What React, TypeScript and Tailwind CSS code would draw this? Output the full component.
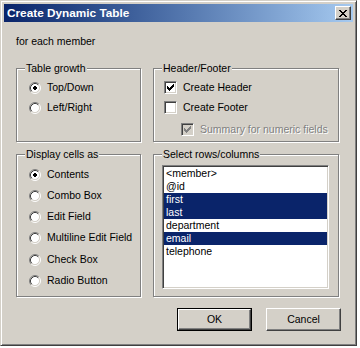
import type { ReactNode } from "react";

function Radio({ checked = false }: { checked?: boolean }) {
  return (
    <svg width="12" height="12" viewBox="0 0 12 12" className="shrink-0">
      <circle cx="6" cy="6" r="4.5" fill="#fff" />
      <path d="M2.11 9.89 A5.5 5.5 0 0 1 9.89 2.11" fill="none" stroke="#808080" strokeWidth="1" />
      <path d="M9.89 2.11 A5.5 5.5 0 0 1 2.11 9.89" fill="none" stroke="#fff" strokeWidth="1" />
      <path d="M2.82 9.18 A4.5 4.5 0 0 1 9.18 2.82" fill="none" stroke="#404040" strokeWidth="1" />
      <path d="M9.18 2.82 A4.5 4.5 0 0 1 2.82 9.18" fill="none" stroke="#d4d0c8" strokeWidth="1" />
      {checked && <path d="M5 4h2v1h1v2h-1v1h-2v-1h-1v-2h1z" fill="#000" />}
    </svg>
  );
}

function Check({ checked = false, disabled = false }: { checked?: boolean; disabled?: boolean }) {
  return (
    <span
      className={`relative block w-[13px] h-[13px] shrink-0 border border-t-[#808080] border-l-[#808080] border-r-[#fff] border-b-[#fff] shadow-[inset_1px_1px_#404040,inset_-1px_-1px_#d4d0c8] ${
        disabled ? "bg-[#d4d0c8]" : "bg-white"
      }`}
    >
      {checked && (
        <svg width="7" height="7" viewBox="0 0 7 7" className="absolute left-[2px] top-[2px]" shapeRendering="crispEdges">
          <path
            d="M6 0h1v3h-1v1h-1v1h-1v1h-1v1h-1v-1h-1v-1h-1v-3h1v1h1v1h1v-1h1v-1h1z"
            fill={disabled ? "#808080" : "#000"}
          />
        </svg>
      )}
    </span>
  );
}

function Group({ label, className, children }: { label: string; className: string; children?: ReactNode }) {
  return (
    <div className={`relative border border-[#808080] shadow-[inset_1px_1px_#fff,1px_1px_#fff] ${className}`}>
      <span className="absolute left-[8px] top-[-7px] bg-[#d4d0c8] px-[1px] leading-[13px]">{label}</span>
      {children}
    </div>
  );
}

function Button({ label, isDefault = false }: { label: string; isDefault?: boolean }) {
  const face = (
    <div className="flex items-center justify-center w-full h-full bg-[#d4d0c8] border border-t-white border-l-white border-r-[#404040] border-b-[#404040] shadow-[inset_-1px_-1px_#808080]">
      {label}
    </div>
  );
  return isDefault ? (
    <div className="w-[75px] h-[23px] border border-black">{face}</div>
  ) : (
    <div className="w-[75px] h-[23px]">{face}</div>
  );
}

const items = [
  { name: "<member>", selected: false },
  { name: "@id", selected: false },
  { name: "first", selected: true },
  { name: "last", selected: true },
  { name: "department", selected: false },
  { name: "email", selected: true },
  { name: "telephone", selected: false },
];

export default function App() {
  return (
    <div className="min-h-screen bg-white font-['Liberation_Sans',Arial,sans-serif] text-[10.5px] leading-[13px] text-black">
      <div className="flex flex-col w-[357px] h-[346px] p-[3px] bg-[#d4d0c8] border border-t-[#d4d0c8] border-l-[#d4d0c8] border-r-[#404040] border-b-[#404040] shadow-[inset_1px_1px_#fff,inset_-1px_-1px_#808080]">
        {/* Title bar */}
        <div className="flex items-center justify-between h-[18px] pl-[3px] pr-[2px] bg-linear-to-r from-[#0a246a] to-[#a6caf0]">
          <span className="text-white font-bold text-[11.8px]">Create Dynamic Table</span>
          <div className="flex items-center justify-center w-[16px] h-[14px] bg-[#d4d0c8] border border-t-white border-l-white border-r-[#404040] border-b-[#404040] shadow-[inset_-1px_-1px_#808080]">
            <svg width="8" height="7" viewBox="0 0 8 7" shapeRendering="crispEdges" className="ml-[-1px]">
              <path
                d="M0 0h2v1h1v1h2v-1h1v-1h2v1h-1v1h-1v1h-1v1h1v1h1v1h1v1h-2v-1h-1v-1h-2v1h-1v1h-2v-1h1v-1h1v-1h1v-1h-1v-1h-1v-1h-1z"
                fill="#000"
              />
            </svg>
          </div>
        </div>

        {/* Body */}
        <div className="flex flex-col flex-1 px-[12px] pt-[13px]">
          <p>for each member</p>

          <div className="flex gap-[12px] mt-[20px]">
            <Group label="Table growth" className="w-[125px] h-[74px]">
              <div className="flex flex-col gap-[7px] pl-[12px] pt-[12px]">
                <div className="flex items-center gap-[6px] h-[13px]">
                  <Radio checked />
                  <span>Top/Down</span>
                </div>
                <div className="flex items-center gap-[6px] h-[13px]">
                  <Radio />
                  <span>Left/Right</span>
                </div>
              </div>
            </Group>
            <Group label="Header/Footer" className="w-[186px] h-[74px]">
              <div className="flex flex-col pl-[10px] pt-[12px]">
                <div className="flex items-center gap-[6px] h-[13px]">
                  <Check checked />
                  <span>Create Header</span>
                </div>
                <div className="flex items-center gap-[6px] h-[13px] mt-[7px]">
                  <Check />
                  <span>Create Footer</span>
                </div>
                <div className="flex items-center gap-[6px] h-[13px] mt-[9px] ml-[17px]">
                  <Check checked disabled />
                  <span className="text-[#808080] [text-shadow:1px_1px_0_#fff]">Summary for numeric fields</span>
                </div>
              </div>
            </Group>
          </div>

          <div className="flex gap-[12px] mt-[12px]">
            <Group label="Display cells as" className="w-[125px] h-[143px]">
              <div className="flex flex-col pl-[12px] pt-[13px]">
                <div className="flex items-center gap-[6px] h-[13px]">
                  <Radio checked />
                  <span>Contents</span>
                </div>
                <div className="flex items-center gap-[6px] h-[13px] mt-[8px]">
                  <Radio />
                  <span>Combo Box</span>
                </div>
                <div className="flex items-center gap-[6px] h-[13px] mt-[8px]">
                  <Radio />
                  <span>Edit Field</span>
                </div>
                <div className="flex items-center gap-[6px] h-[13px] mt-[8px]">
                  <Radio />
                  <span>Multiline Edit Field</span>
                </div>
                <div className="flex items-center gap-[6px] h-[13px] mt-[9px]">
                  <Radio />
                  <span>Check Box</span>
                </div>
                <div className="flex items-center gap-[6px] h-[13px] mt-[8px]">
                  <Radio />
                  <span>Radio Button</span>
                </div>
              </div>
            </Group>
            <Group label="Select rows/columns" className="w-[186px] h-[143px]">
              <div className="ml-[8px] mt-[10px] w-[167px] h-[124px] p-[1px] bg-white border border-t-[#808080] border-l-[#808080] border-r-white border-b-white shadow-[inset_1px_1px_#404040,inset_-1px_-1px_#d4d0c8]">
                {items.map((it) => (
                  <div
                    key={it.name}
                    className={`h-[13px] pl-[2px] ${it.selected ? "bg-[#0a246a] text-white" : ""}`}
                  >
                    {it.name}
                  </div>
                ))}
              </div>
            </Group>
          </div>

          <div className="flex justify-end gap-[14px] mt-[11px]">
            <Button label="OK" isDefault />
            <Button label="Cancel" />
          </div>
        </div>
      </div>
    </div>
  );
}
